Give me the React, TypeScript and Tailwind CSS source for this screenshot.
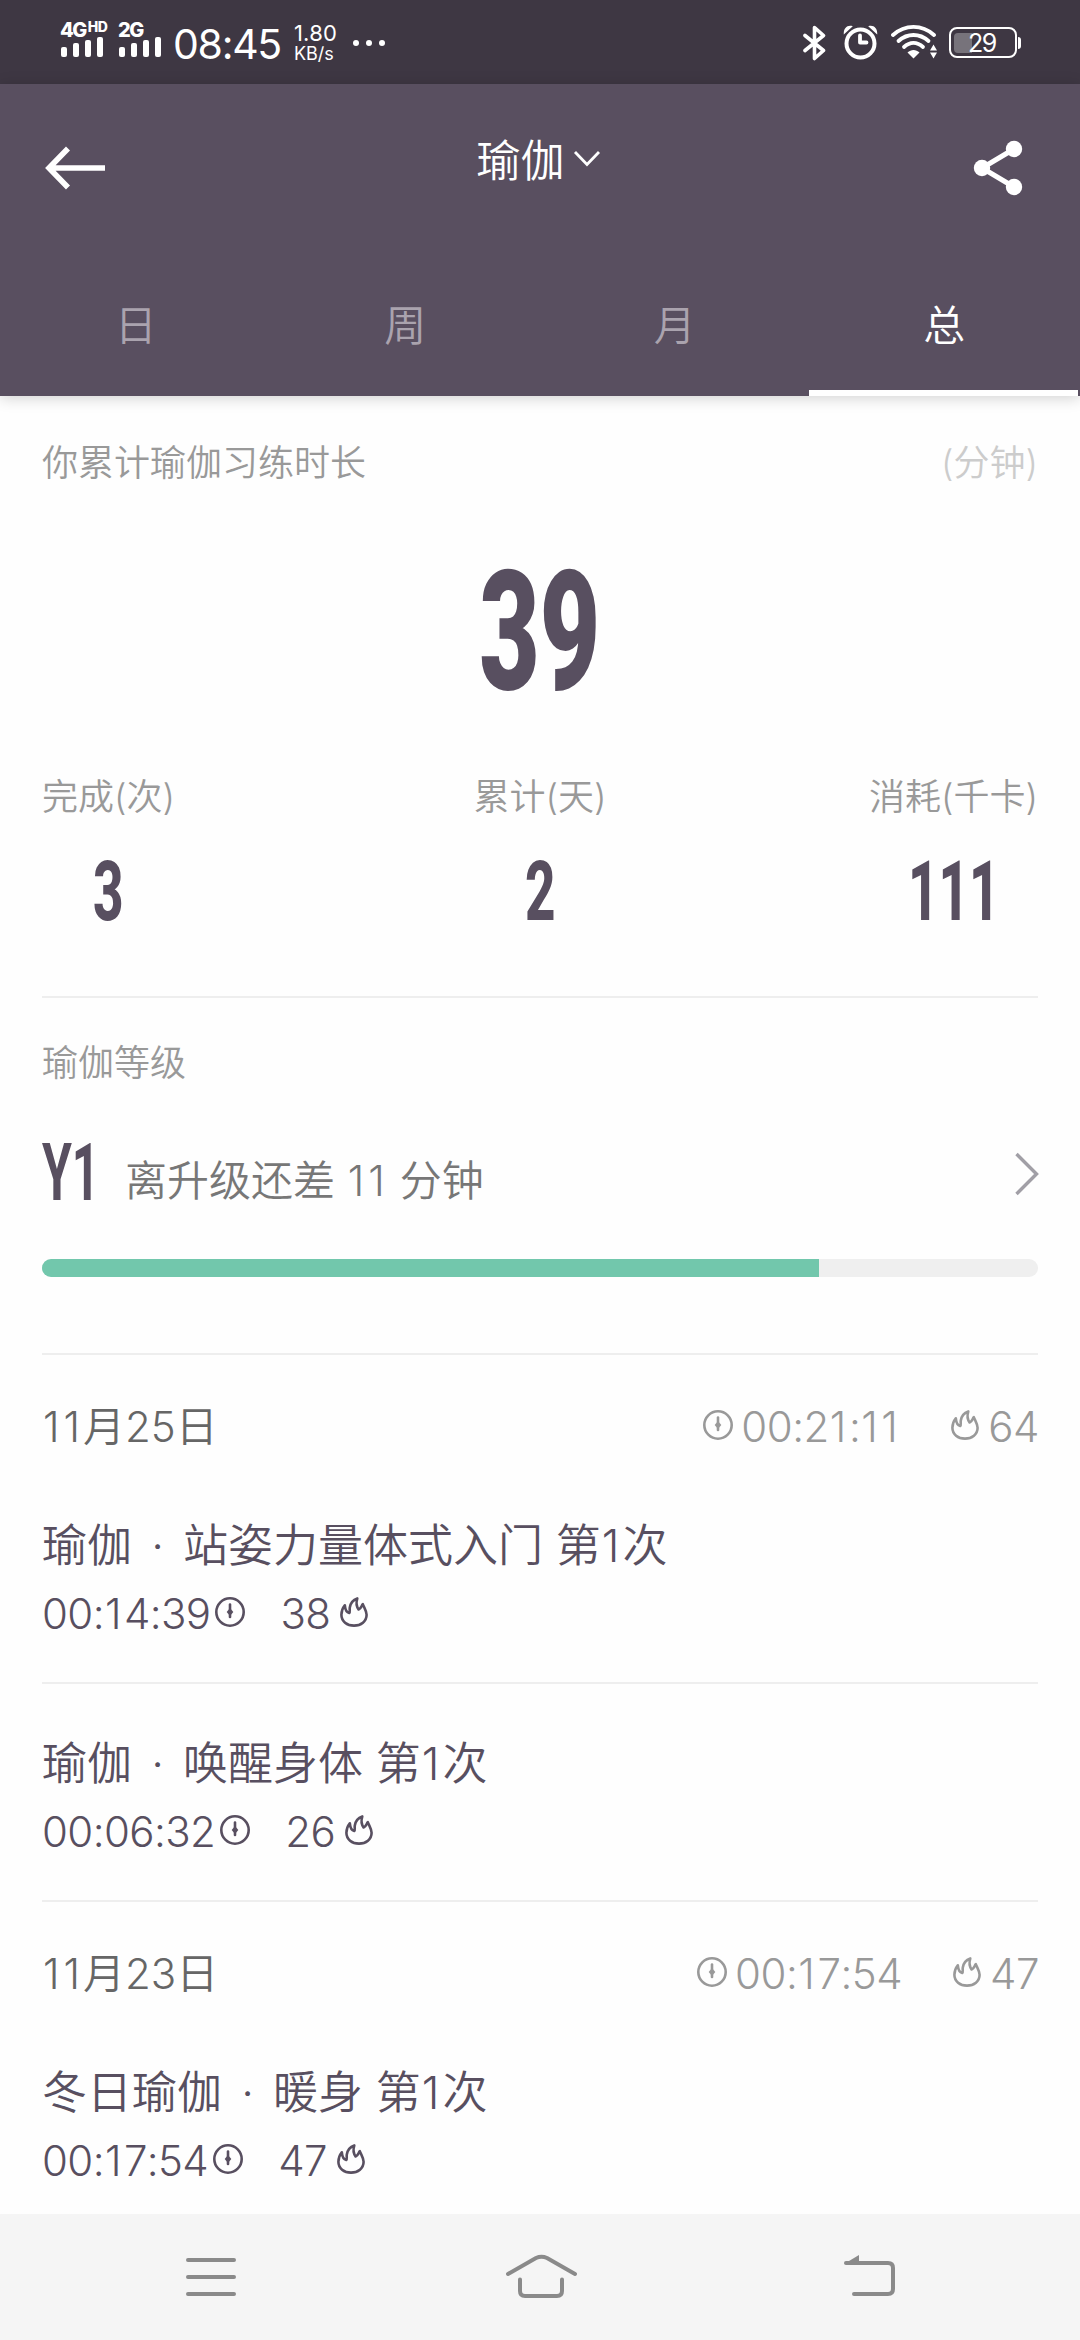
import { useState } from 'react'

const tabs = ['日', '周', '月', '总']

const stats = [
  { label: '完成(次)', value: '3' },
  { label: '累计(天)', value: '2' },
  { label: '消耗(千卡)', value: '111' },
]

const days = [
  {
    date: '11月25日',
    duration: '00:21:11',
    calories: '64',
    items: [
      { group: '瑜伽', title: '站姿力量体式入门 第1次', duration: '00:14:39', calories: '38' },
      { group: '瑜伽', title: '唤醒身体 第1次', duration: '00:06:32', calories: '26' },
    ],
  },
  {
    date: '11月23日',
    duration: '00:17:54',
    calories: '47',
    items: [{ group: '冬日瑜伽', title: '暖身 第1次', duration: '00:17:54', calories: '47' }],
  },
]

// Gives the narrow "1" a little more room than the font does
function Num({ children }: { children: string }) {
  return (
    <span className="whitespace-pre">
      {children.split(/(1)/).map((part, i) =>
        part === '1' ? (
          <span key={i} className="pl-[1px] pr-[3px]">
            1
          </span>
        ) : (
          part
        )
      )}
    </span>
  )
}

function ClockIcon() {
  return (
    <svg width="30" height="30" viewBox="0 0 30 30" fill="none" className="flex-shrink-0">
      <circle cx="15" cy="15" r="13.7" stroke="currentColor" strokeWidth="2.6" />
      <path d="M15 7.5v12.5" stroke="currentColor" strokeWidth="2.6" strokeLinecap="round" />
      <path d="M15 11l3.300 4L15 19 11.700 15z" fill="currentColor" />
    </svg>
  )
}

function FlameIcon() {
  return (
    <svg width="28" height="30" viewBox="0 0 28 30" fill="none" className="flex-shrink-0">
      <path
        d="M4.800 8.200C2.400 11.200 1.400 14.500 1.400 17.800C1.400 24.300 7 28.600 14 28.600S26.600 24.300 26.600 17.800C26.600 14 24.500 11.500 22.800 7.200C21.500 8.500 21.500 11.500 18.600 12.500C16.500 9.500 16 5.500 17.300 1.400C13 2.800 10.500 6 9.800 10.500C9.400 13 10.300 15 9.200 16C6.500 15.500 5.200 12.500 4.800 8.200Z"
        stroke="currentColor"
        strokeWidth="2.6"
        strokeLinejoin="round"
      />
    </svg>
  )
}

function Signal({ label, sup }: { label: string; sup?: string }) {
  return (
    <div className="flex flex-col">
      <div className="flex h-[18px] items-start text-[20px] font-extrabold leading-[22px] tracking-[-1.5px]">
        {label}
        {sup && <span className="ml-[2px] text-[14px] leading-[16px] tracking-[-0.5px]">{sup}</span>}
      </div>
      <div className="flex h-5 items-end gap-[6px] pl-[1px]">
        <div className="h-[10px] w-[6px] rounded-[2px] bg-white" />
        <div className="h-[14px] w-[6px] rounded-[2px] bg-white" />
        <div className="h-[17px] w-[6px] rounded-[2px] bg-white" />
        <div className="h-5 w-[6px] rounded-[2px] bg-white" />
      </div>
    </div>
  )
}

function StatusBar() {
  return (
    <div className="flex h-[84px] bg-[#3e3743] pl-[60px] pr-[59px] text-white">
      <div className="flex w-[58px] pt-[19px]">
        <Signal label="4G" sup="HD" />
      </div>
      <div className="flex w-[55px] pt-[19px]">
        <Signal label="2G" />
      </div>
      <div className="w-[121px] whitespace-nowrap pt-[24px] text-[41px] leading-[40px] tracking-[-1.3px]">08:45</div>
      <div className="w-[59px] whitespace-nowrap pt-[22px]">
        <div className="text-[22px] leading-[22px]">1.80</div>
        <div className="text-[18px] leading-[20px]">KB/s</div>
      </div>
      <div className="flex gap-[7px] pt-10">
        <div className="size-[6px] rounded-full bg-white" />
        <div className="size-[6px] rounded-full bg-white" />
        <div className="size-[6px] rounded-full bg-white" />
      </div>
      <div className="ml-auto flex pt-[25px]">
        {/* Bluetooth */}
        <svg width="24" height="36" viewBox="0 0 24 36" fill="none" stroke="white" strokeWidth="3.6" strokeLinejoin="round" strokeLinecap="round">
          <path d="M2 10.500L20.500 25.500L11.500 33.500V2.500L20.500 10.500L2 25.500" />
        </svg>
        {/* Alarm */}
        <svg className="ml-4" width="36" height="36" viewBox="0 0 36 36" fill="none" stroke="white">
          <circle cx="17.500" cy="18.500" r="14" strokeWidth="4" />
          <path d="M17 10.500V17.500H23.500" strokeWidth="3.800" strokeLinecap="round" strokeLinejoin="round" />
          <path d="M0.800 9.500C0.300 3.500 4 -0.500 9.800 1.200zM34.200 9.500C34.700 3.500 31 -0.500 25.200 1.200z" fill="white" stroke="none" />
        </svg>
        {/* Wifi */}
        <svg className="ml-[12px]" width="48" height="36" viewBox="0 0 48 36" fill="none" stroke="white" strokeWidth="3.800" strokeLinecap="round">
          <path d="M2 10C14 -0.800 31 -0.800 43 10" />
          <path d="M7.500 16C16.500 8 28.500 8 37.500 16" />
          <path d="M13 22C19 16.500 26 16.500 32 22" />
          <path d="M22.500 33.500L16.500 27.500C20 24 25 24 28.500 27.500z" fill="white" stroke="none" />
          <path d="M42.500 19.500l3.500 6h-7zM42.500 33.500l3.500-6h-7z" fill="white" stroke="none" />
        </svg>
        {/* Battery */}
        <div className="ml-[10px] flex h-[33px] items-center pt-[2px]">
          <div className="flex h-[31px] w-[68px] items-center rounded-[8px] border-2 border-white pl-[3px]">
            <div className="h-5 w-[18px] rounded-l-[4px] bg-[#77737b]" />
            <span className="-ml-[4px] text-[25px] leading-[26px] tracking-[-1.6px]">29</span>
          </div>
          <div className="ml-[1px] h-3 w-[3px] rounded-r-[3px] bg-white" />
        </div>
      </div>
    </div>
  )
}

function Header() {
  const [active, setActive] = useState('总')

  return (
    <div className="flex h-[312px] flex-col bg-[#594f60] text-white shadow-[0_2px_14px_rgba(0,0,0,0.18)] [font-weight:350]">
      <div className="flex h-[156px] justify-between pl-[45px] pr-[57px] pt-[56px]">
        <svg className="mt-[6px]" width="61" height="44" viewBox="0 0 61 44" fill="none" stroke="white" strokeWidth="5.600">
          <path d="M23 2.500L4 22L23 41.500M4 22H60" />
        </svg>
        <div className="-ml-[2px] flex">
          <span className="-mt-[6px] text-[44px] leading-[54px]">瑜伽</span>
          <svg className="ml-[8px] mt-[10px]" width="28" height="18" viewBox="0 0 28 18" fill="none" stroke="white" strokeWidth="2.800">
            <path d="M2 2L14 14.500L26 2" />
          </svg>
        </div>
        <svg width="50" height="56" viewBox="0 0 50 56" fill="white">
          <path d="M41 9L9 28L41 47" fill="none" stroke="white" strokeWidth="5" />
          <circle cx="41" cy="9" r="8.200" />
          <circle cx="9" cy="28" r="8.200" />
          <circle cx="41" cy="47" r="8.200" />
        </svg>
      </div>
      <div className="grid h-[156px] w-[1078px] grid-cols-4">
        {tabs.map((tab) => (
          <button
            key={tab}
            onClick={() => setActive(tab)}
            className={`border-b-[6px] pl-[2px] pt-[22px] text-[42px] leading-none ${
              active === tab ? 'border-white text-white' : 'border-transparent text-[#aaa3ae]'
            }`}
          >
            {tab}
          </button>
        ))}
      </div>
    </div>
  )
}

function Summary() {
  return (
    <section className="h-[602px] border-b-2 border-[#eeeeee] pt-[40px]">
      <div className="flex h-[54px] items-center justify-between text-[36px] text-[#999999]">
        <span>你累计瑜伽习练时长</span>
        <span className="text-[#cccccc]">(分钟)</span>
      </div>
      <div className="mt-[57px] flex h-[170px] items-center justify-center font-['Roboto'] text-[167px] font-black leading-none text-[#584f60]">
        <span className="scale-x-[0.625]">39</span>
      </div>
      <div className="mt-[53px] grid grid-cols-3">
        {stats.map((stat) => (
          <div key={stat.label} className="flex flex-col items-center first:justify-self-start last:justify-self-end">
            <span className="text-[36px] leading-[54px] text-[#999999]">{stat.label}</span>
            <span className="mt-[23px] h-[90px] scale-x-[0.63] font-['Roboto'] text-[84px] font-extrabold leading-[90px] text-[#584f60]">
              {stat.value}
            </span>
          </div>
        ))}
      </div>
    </section>
  )
}

function Level() {
  return (
    <section className="h-[357px] border-b-2 border-[#eeeeee] pt-[38px]">
      <div className="text-[36px] leading-[54px] text-[#999999]">瑜伽等级</div>
      <div className="mt-[42px] flex h-[80px]">
        <div className="w-[83px]">
          <span className="inline-block origin-left scale-x-[0.61] font-['Roboto'] text-[79px] font-bold leading-[82px] text-[#584f60]">
            Y1
          </span>
        </div>
        <span className="pt-[19px] text-[42px] leading-[60px] text-[#777777]">
          离升级还差 <Num>11</Num> 分钟
        </span>
        <svg className="-mr-[1px] ml-auto mt-[20px]" width="25" height="44" viewBox="0 0 25 44" fill="none" stroke="#a19fa6" strokeWidth="3.400">
          <path d="M2.500 2L22.500 22L2.500 42" />
        </svg>
      </div>
      <div className="mt-[47px] h-[18px] overflow-hidden rounded-full bg-[#efefef]">
        <div className="h-full w-[78%] bg-[#72c7ac]" />
      </div>
    </section>
  )
}

function History() {
  return (
    <section>
      {days.map((day) => (
        <div key={day.date}>
          <div className="flex h-[111px] items-center pt-[32px] text-[42px] leading-[60px] text-[#666666]">
            <Num>{day.date}</Num>
            <div className="-mr-[1px] ml-auto flex items-center tracking-[-0.5px] text-[#999999]">
              <div className="-mt-1">
                <ClockIcon />
              </div>
              <span className="ml-[8px]">
                <Num>{day.duration}</Num>
              </span>
              <div className="-mt-1 ml-[51px]">
                <FlameIcon />
              </div>
              <span className="ml-[9px]">
                <Num>{day.calories}</Num>
              </span>
            </div>
          </div>
          {day.items.map((item) => (
            <div key={item.title} className="h-[218px] border-b-2 border-[#eeeeee] pt-[45px] text-[#584f60]">
              <div className="flex text-[45px] leading-[70px]">
                <span>{item.group}</span>
                <span className="w-[51px] text-center">·</span>
                <Num>{item.title}</Num>
              </div>
              <div className="flex h-[65px] items-center text-[42px] leading-[65px] tracking-[-0.6px]">
                <Num>{item.duration}</Num>
                <div className="-mt-1 ml-[5px]">
                  <ClockIcon />
                </div>
                <span className="ml-[35px]">
                  <Num>{item.calories}</Num>
                </span>
                <div className="-mt-1 ml-[10px]">
                  <FlameIcon />
                </div>
              </div>
            </div>
          ))}
        </div>
      ))}
    </section>
  )
}

function NavBar() {
  return (
    <div className="flex h-[126px] flex-shrink-0 bg-[#f5f5f5] pl-[185px] pt-[40px]">
      <svg width="52" height="46" viewBox="0 0 52 46" stroke="#8a8a8a" strokeWidth="4" strokeLinecap="round">
        <path d="M3 6H49M3 23H49M3 40H49" />
      </svg>
      <svg className="ml-[268px]" width="74" height="46" viewBox="0 0 74 46" fill="none" stroke="#8a8a8a" strokeWidth="4" strokeLinecap="round" strokeLinejoin="round">
        <path d="M3 20L31 4Q36.500 1.500 42 4L70 20" />
        <path d="M15 25.500V37Q15 42 20 42H52Q57 42 57 37V25.500" />
      </svg>
      <svg className="ml-[264px]" width="54" height="46" viewBox="0 0 54 46" fill="none" stroke="#8a8a8a" strokeWidth="4" strokeLinecap="round">
        <path d="M3 9H45Q50 9 50 14V35Q50 40 45 40H11" />
        <path d="M1 10L16 1V10z" fill="#8a8a8a" stroke="none" />
      </svg>
    </div>
  )
}

export default function App() {
  return (
    <div className="flex h-[2340px] w-[1080px] flex-col overflow-hidden bg-[#fefefe] font-['Inter','Noto_Sans_CJK_SC',sans-serif] [font-kerning:none]">
      <StatusBar />
      <Header />
      <main className="h-[1818px] overflow-hidden px-[42px] [font-weight:350]">
        <Summary />
        <Level />
        <History />
      </main>
      <NavBar />
    </div>
  )
}
